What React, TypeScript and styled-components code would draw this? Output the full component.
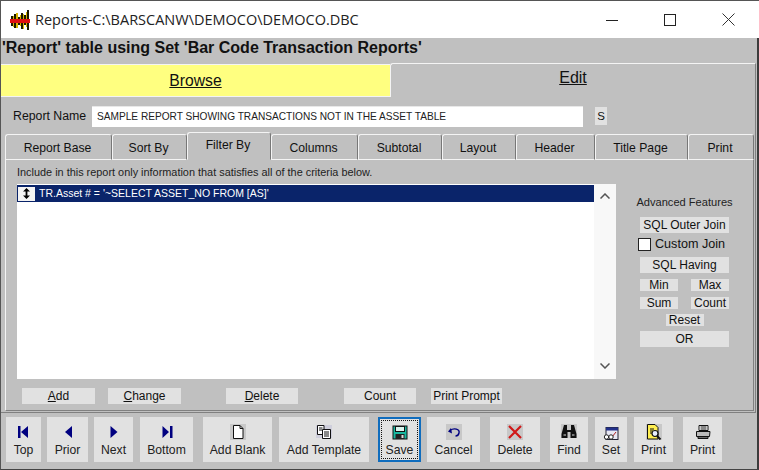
import { ReactNode } from 'react';
import styled, { createGlobalStyle } from 'styled-components';

const GlobalStyle = createGlobalStyle`
  html, body {
    margin: 0;
    padding: 0;
    background: #c0c0c0;
  }
  body {
    font-family: "Liberation Sans", Arial, sans-serif;
    color: #111;
    overflow: hidden;
  }
`;

const Window = styled.div`
  width: 759px;
  height: 470px;
  box-sizing: border-box;
  border-top: 1px solid #555;
  border-left: 1px solid #555;
  border-bottom: 1px solid #444;
  background: #c0c0c0;
  display: flex;
  flex-direction: column;
  overflow: hidden;
`;

const TitleBar = styled.div`
  height: 37px;
  flex: none;
  background: #fff;
  display: flex;
  align-items: center;
  padding-left: 9px;
  padding-right: 8px;
`;

const TitleText = styled.div`
  font-family: "Open Sans", "Noto Sans", sans-serif;
  font-size: 14.5px;
  color: #222;
  margin-left: 5px;
  flex: 1;
  white-space: nowrap;
`;

const WindowButton = styled.div`
  width: 46px;
  height: 37px;
  margin-left: 12px;
  display: flex;
  align-items: center;
  justify-content: center;
`;

const Content = styled.div`
  flex: 1;
  min-height: 0;
  display: flex;
  flex-direction: column;
  border-right: 2px solid #3c3c3c;
`;

const Heading = styled.div`
  height: 25px;
  flex: none;
  font-size: 16px;
  font-weight: bold;
  line-height: 19px;
  color: #111;
  padding-left: 1px;
  white-space: nowrap;
`;

const TopTabs = styled.div`
  height: 34px;
  flex: none;
  display: flex;
  margin-right: 1px;
`;

const BrowseTab = styled.div`
  width: 389px;
  margin-top: 1px;
  background: #ffff80;
  border-top: 1px solid #f4f4f4;
  border-bottom: 1px solid #f4f4f4;
  box-sizing: border-box;
  font-size: 15.7px;
  text-align: center;
  line-height: 32px;
  text-decoration: underline;
`;

const EditTab = styled.div`
  flex: 1;
  height: 34px;
  box-sizing: border-box;
  border-top: 1px solid #f4f4f4;
  border-left: 1px solid #f4f4f4;
  border-top-left-radius: 3px;
  border-right: 1px solid #808080;
  font-size: 16px;
  text-align: center;
  line-height: 28px;
  text-decoration: underline;
`;

const Frame = styled.div`
  height: 316px;
  flex: none;
  box-sizing: border-box;
  margin-right: 1px;
  border-right: 1px solid #808080;
  border-bottom: 1px solid #808080;
  padding-bottom: 1px;
  display: flex;
  flex-direction: column;
`;

const NameRow = styled.div`
  height: 22px;
  margin-top: 8px;
  flex: none;
  display: flex;
  align-items: center;
  padding-left: 12px;
`;

const NameLabel = styled.span`
  font-size: 12.3px;
  width: 79px;
  white-space: nowrap;
`;

const NameInput = styled.div`
  width: 491px;
  height: 21px;
  box-sizing: border-box;
  background: #fff;
  border-top: 1px solid #e8e8e8;
  font-size: 10.15px;
  line-height: 20px;
  padding-left: 5px;
  white-space: nowrap;
  color: #222;
`;

const SmallS = styled.div`
  width: 12px;
  height: 18px;
  margin-left: 12px;
  background: #e1e1e1;
  font-size: 11.5px;
  line-height: 18px;
  text-align: center;
`;

const TabRow = styled.div`
  height: 28px;
  margin-top: 5px;
  flex: none;
  display: flex;
  align-items: flex-end;
  padding-left: 4px;
`;

const PageTab = styled.div<{ $w: number; $active?: boolean }>`
  width: ${({ $w }) => $w}px;
  height: ${({ $active }) => ($active ? 28 : 26)}px;
  box-sizing: border-box;
  flex: none;
  border-top: 1px solid #f4f4f4;
  border-left: 1px solid #f4f4f4;
  border-right: 1px solid #777;
  border-radius: 3px 3px 0 0;
  border-bottom: ${({ $active }) => ($active ? '1px solid #c0c0c0' : '1px solid #f4f4f4')};
  font-size: 12.2px;
  line-height: ${({ $active }) => ($active ? 25 : 26)}px;
  padding-right: 2px;
  text-align: center;
  white-space: nowrap;
`;

const Panel = styled.div`
  flex: 1;
  min-height: 0;
  margin: 0 1px 0 4px;
  border-left: 1px solid #f4f4f4;
  border-right: 1px solid #808080;
  border-bottom: 1px solid #808080;
  display: flex;
  flex-direction: column;
  padding-left: 11px;
`;

const Hint = styled.div`
  font-size: 10.9px;
  height: 15px;
  line-height: 12px;
  margin-top: 6px;
  flex: none;
  color: #222;
  white-space: nowrap;
`;

const Body = styled.div`
  display: flex;
  height: 195px;
  margin-top: 3px;
  flex: none;
`;

const ListBox = styled.div`
  width: 599px;
  flex: none;
  background: #fff;
  display: flex;
`;

const ListMain = styled.div`
  flex: 1;
  padding-top: 1px;
`;

const ListRow = styled.div`
  height: 17px;
  background: #0a246a;
  color: #fff;
  font-size: 10.5px;
  line-height: 17px;
  display: flex;
  align-items: center;
  padding-left: 1px;
  white-space: nowrap;
`;

const RowGrip = styled.div`
  width: 17px;
  height: 14px;
  background: #f4f4f4;
  margin-right: 4px;
  display: flex;
  align-items: center;
  justify-content: center;
`;

const Scrollbar = styled.div`
  width: 22px;
  flex: none;
  background: #f8f8f8;
  display: flex;
  flex-direction: column;
  justify-content: space-between;
  align-items: center;
  padding: 9px 0 10px;
  box-sizing: border-box;
`;

const Advanced = styled.div`
  width: 105px;
  margin-left: 16px;
  display: flex;
  flex-direction: column;
  align-items: center;
  padding-top: 12px;
`;

const AdvancedTitle = styled.div`
  font-size: 11.1px;
  line-height: 12px;
  margin-bottom: 9px;
  white-space: nowrap;
  color: #222;
`;

const SideButton = styled.div<{ $w: number; $h: number; $mt?: number }>`
  width: ${({ $w }) => $w}px;
  height: ${({ $h }) => $h}px;
  margin-top: ${({ $mt }) => $mt ?? 0}px;
  background: #e1e1e1;
  font-size: 12px;
  line-height: ${({ $h }) => $h}px;
  text-align: center;
  white-space: nowrap;
  flex: none;
`;

const JoinRow = styled.div`
  display: flex;
  align-items: center;
  height: 16px;
  width: 92px;
  margin: 3px 0 0 -1px;
  font-size: 12.6px;
  white-space: nowrap;
`;

const CheckBox = styled.span`
  width: 11px;
  height: 11px;
  background: #fff;
  border: 1px solid #222;
  margin-right: 4px;
  flex: none;
`;

const TwoUp = styled.div<{ $mt: number }>`
  display: flex;
  width: 89px;
  justify-content: space-between;
  margin-top: ${({ $mt }) => $mt}px;
`;

const ActionRow = styled.div`
  display: flex;
  margin-top: 9px;
  padding-left: 5px;
`;

const ActionButton = styled.div<{ $w?: number; $ml: number }>`
  width: ${({ $w }) => $w ?? 72}px;
  height: 16px;
  margin-left: ${({ $ml }) => $ml}px;
  background: #e1e1e1;
  font-size: 12px;
  line-height: 16px;
  text-align: center;
  white-space: nowrap;
  flex: none;
`;

const Toolbar = styled.div`
  height: 45px;
  flex: none;
  margin-top: 4px;
  padding-left: 5px;
  display: flex;
`;

const ToolButton = styled.div<{ $w: number; $ml?: number; $focus?: boolean }>`
  width: ${({ $w }) => $w}px;
  margin-left: ${({ $ml }) => $ml ?? 0}px;
  height: 45px;
  flex: none;
  box-sizing: border-box;
  background: #e1e1e1;
  font-size: 12.2px;
  display: flex;
  flex-direction: column;
  align-items: center;
  color: #222;
  white-space: nowrap;
  border: ${({ $focus }) => ($focus ? '2px solid #0f6cbd' : 'none')};
  padding-top: ${({ $focus }) => ($focus ? 5 : 7)}px;
  position: relative;
`;

const ToolIcon = styled.div`
  width: 16px;
  height: 16px;
  margin-bottom: 3px;
`;

const FocusDots = styled.div`
  position: absolute;
  inset: 1px;
  border: 1px dotted #111;
`;

const BarcodeLogo = () => (
  <svg width="20" height="20" viewBox="0 0 20 20">
    <path d="M1 6H3V16H1ZM4 4H6V18H4ZM8 7H10V15H8ZM11 3H13V19H11ZM14 5H16V15H14ZM17 0H19V20H17Z" fill="#1c1800" />
    <path d="M3 6H4V17H3ZM6 3H8V18H6ZM10 5H11V16H10ZM13 4H14V19H13ZM16 2H17V17H16Z" fill="#d8b400" />
    <rect x="0" y="9" width="20" height="4" fill="#e01010" />
  </svg>
);

const Icon = ({ children }: { children: ReactNode }) => (
  <svg width="16" height="16" viewBox="0 0 16 16">{children}</svg>
);

const NAVY = '#000080';

export default function App() {
  return (
    <Window>
      <GlobalStyle />
      <TitleBar>
        <BarcodeLogo />
        <TitleText>Reports-C:\BARSCANW\DEMOCO\DEMOCO.DBC</TitleText>
        <WindowButton>
          <svg width="12" height="12"><path d="M0 6.5H12" stroke="#222" /></svg>
        </WindowButton>
        <WindowButton>
          <svg width="12" height="12"><rect x="0.5" y="0.5" width="11" height="11" fill="none" stroke="#222" /></svg>
        </WindowButton>
        <WindowButton>
          <svg width="13" height="13"><path d="M0.5 0.5L12.5 12.5M12.5 0.5L0.5 12.5" stroke="#333" /></svg>
        </WindowButton>
      </TitleBar>
      <Content>
        <Heading>'Report' table using Set 'Bar Code Transaction Reports'</Heading>
        <TopTabs>
          <BrowseTab>Browse</BrowseTab>
          <EditTab>Edit</EditTab>
        </TopTabs>
        <Frame>
          <NameRow>
            <NameLabel>Report Name</NameLabel>
            <NameInput>SAMPLE REPORT SHOWING TRANSACTIONS NOT IN THE ASSET TABLE</NameInput>
            <SmallS>S</SmallS>
          </NameRow>
          <TabRow>
            <PageTab $w={107}>Report Base</PageTab>
            <PageTab $w={75}>Sort By</PageTab>
            <PageTab $w={84} $active>Filter By</PageTab>
            <PageTab $w={87}>Columns</PageTab>
            <PageTab $w={84}>Subtotal</PageTab>
            <PageTab $w={74}>Layout</PageTab>
            <PageTab $w={79}>Header</PageTab>
            <PageTab $w={93}>Title Page</PageTab>
            <PageTab $w={66}>Print</PageTab>
          </TabRow>
          <Panel>
            <Hint>Include in this report only information that satisfies all of the criteria below.</Hint>
            <Body>
              <ListBox>
                <ListMain>
                  <ListRow>
                    <RowGrip>
                      <svg width="9" height="11" viewBox="0 0 9 11">
                        <path d="M4.5 0L8 3.5H1ZM4.5 11L1 7.5H8Z" fill="#000" />
                        <rect x="3.6" y="3" width="1.8" height="5" fill="#000" />
                      </svg>
                    </RowGrip>
                    TR.Asset # = '~SELECT ASSET_NO FROM [AS]'
                  </ListRow>
                </ListMain>
                <Scrollbar>
                  <svg width="10" height="6"><path d="M0.5 5.5L5 1L9.5 5.5" fill="none" stroke="#555" strokeWidth="1.5" /></svg>
                  <svg width="10" height="6"><path d="M0.5 0.5L5 5L9.5 0.5" fill="none" stroke="#555" strokeWidth="1.5" /></svg>
                </Scrollbar>
              </ListBox>
              <Advanced>
                <AdvancedTitle>Advanced Features</AdvancedTitle>
                <SideButton $w={89} $h={16}>SQL Outer Join</SideButton>
                <JoinRow><CheckBox />Custom Join</JoinRow>
                <SideButton $w={89} $h={16} $mt={5}>SQL Having</SideButton>
                <TwoUp $mt={6}>
                  <SideButton $w={38} $h={12}>Min</SideButton>
                  <SideButton $w={38} $h={12}>Max</SideButton>
                </TwoUp>
                <TwoUp $mt={6}>
                  <SideButton $w={38} $h={12}>Sum</SideButton>
                  <SideButton $w={38} $h={12}>Count</SideButton>
                </TwoUp>
                <SideButton $w={38} $h={12} $mt={5}>Reset</SideButton>
                <SideButton $w={89} $h={16} $mt={5}>OR</SideButton>
              </Advanced>
            </Body>
            <ActionRow>
              <ActionButton $ml={0} $w={73}><u>A</u>dd</ActionButton>
              <ActionButton $ml={13} $w={73}><u>C</u>hange</ActionButton>
              <ActionButton $ml={45}><u>D</u>elete</ActionButton>
              <ActionButton $ml={46}>Count</ActionButton>
              <ActionButton $ml={15} $w={71}>Print Prompt</ActionButton>
            </ActionRow>
          </Panel>
        </Frame>
        <Toolbar>
          <ToolButton $w={35}>
            <ToolIcon><Icon><path d="M2 2H4.5V14H2ZM12 2V14L5 8Z" fill={NAVY} /></Icon></ToolIcon>Top
          </ToolButton>
          <ToolButton $w={41} $ml={6}>
            <ToolIcon><Icon><path d="M12 2V14L5 8Z" fill={NAVY} /></Icon></ToolIcon>Prior
          </ToolButton>
          <ToolButton $w={39} $ml={6}>
            <ToolIcon><Icon><path d="M4.5 2V14L11.5 8Z" fill={NAVY} /></Icon></ToolIcon>Next
          </ToolButton>
          <ToolButton $w={53} $ml={7}>
            <ToolIcon><Icon><path d="M3.5 2V14L10 8ZM11 2H13.5V14H11Z" fill={NAVY} /></Icon></ToolIcon>Bottom
          </ToolButton>
          <ToolButton $w={69} $ml={10}>
            <ToolIcon><Icon>
              <rect width="16" height="16" fill="#c8c8c8" />
              <path d="M3.5 1.5H10L13 4.5V14.5H3.5Z" fill="#fff" stroke="#111" />
              <path d="M10 1.5V4.5H13" fill="none" stroke="#111" />
            </Icon></ToolIcon>Add Blank
          </ToolButton>
          <ToolButton $w={90} $ml={7}>
            <ToolIcon><Icon>
              <rect y="1" width="16" height="13" fill="#cfcfdc" />
              <path d="M1.5 1.5H8V10.5H1.5Z" fill="#fff" stroke="#111" />
              <path d="M6.5 5.5H14.5V14.5H6.5Z" fill="#fff" stroke="#111" />
              <path d="M3 4H6.5M3 6H6M8 8H13M8 10H13M8 12H13" stroke="#111" />
            </Icon></ToolIcon>Add Template
          </ToolButton>
          <ToolButton $w={43} $ml={9} $focus>
            <FocusDots />
            <ToolIcon><Icon>
              <rect x="1" y="2" width="14" height="13" fill="#18b8a0" stroke="#111" />
              <rect x="3.5" y="2.5" width="9" height="5" fill="#d8f4ee" stroke="#111" />
              <rect x="3.5" y="10" width="9" height="5" fill="#222" />
              <rect x="9.5" y="11" width="2" height="3" fill="#ddd" />
            </Icon></ToolIcon>Save
          </ToolButton>
          <ToolButton $w={53} $ml={6}>
            <ToolIcon><Icon>
              <rect width="16" height="16" fill="#c8c8c8" />
              <path d="M5 4L2 7.5L6 9.5Z" fill={NAVY} />
              <path d="M4 6.5C8 3.5 14 5 13 9C12.6 11 11 12 9.5 12" fill="none" stroke={NAVY} strokeWidth="1.4" />
            </Icon></ToolIcon>Cancel
          </ToolButton>
          <ToolButton $w={50} $ml={10}>
            <ToolIcon><Icon>
              <rect width="16" height="16" fill="#c8c8c8" />
              <path d="M2 2L14 14M14 2L2 14" stroke="#d01818" strokeWidth="2.2" />
            </Icon></ToolIcon>Delete
          </ToolButton>
          <ToolButton $w={38} $ml={10}>
            <ToolIcon><Icon>
              <rect width="16" height="14" fill="#c8c8c8" />
              <path d="M3 1H6V6H10V1H13L15.5 10V14H9.5V8H6.5V14H0.5V10Z" fill="#111" />
              <path d="M2.5 11H5M11 11H13.5" stroke="#ddd" />
            </Icon></ToolIcon>Find
          </ToolButton>
          <ToolButton $w={32} $ml={7}>
            <ToolIcon><Icon>
              <rect x="3" y="3.5" width="12" height="12" fill="#e8e8f4" stroke="#223" />
              <rect x="3" y="3.5" width="12" height="3" fill="#22308a" />
              <path d="M9 13L13 8" stroke="#b02020" />
              <circle cx="3.5" cy="13" r="2.2" fill="#fff" stroke="#222" />
              <circle cx="8" cy="13" r="2.2" fill="#fff" stroke="#222" />
            </Icon></ToolIcon>Set
          </ToolButton>
          <ToolButton $w={39} $ml={7}>
            <ToolIcon><Icon>
              <rect width="16" height="16" fill="#c8c8c8" />
              <path d="M1.5 0.5H9L12 3.5V15H1.5Z" fill="#ffef50" stroke="#111" />
              <path d="M4 5H8M4 7H7M4 9H6" stroke="#111" />
              <circle cx="9" cy="9.5" r="3" fill="#e8f0ff" stroke="#111" strokeWidth="1.2" />
              <path d="M11 12L14.5 15.5" stroke="#111" strokeWidth="2" />
            </Icon></ToolIcon>Print
          </ToolButton>
          <ToolButton $w={39} $ml={10}>
            <ToolIcon><Icon>
              <path d="M4 1.5H13V6.5H4Z" fill="#fff" stroke="#111" />
              <path d="M5.5 3H11.5M5.5 5H11.5" stroke="#111" />
              <path d="M1.5 7.5H15L14.5 12.5H1.5Z" fill="#bbb" stroke="#111" />
              <path d="M3 12.5H13V14.5H3Z" fill="#666" stroke="#111" />
            </Icon></ToolIcon>Print
          </ToolButton>
        </Toolbar>
      </Content>
    </Window>
  );
}
